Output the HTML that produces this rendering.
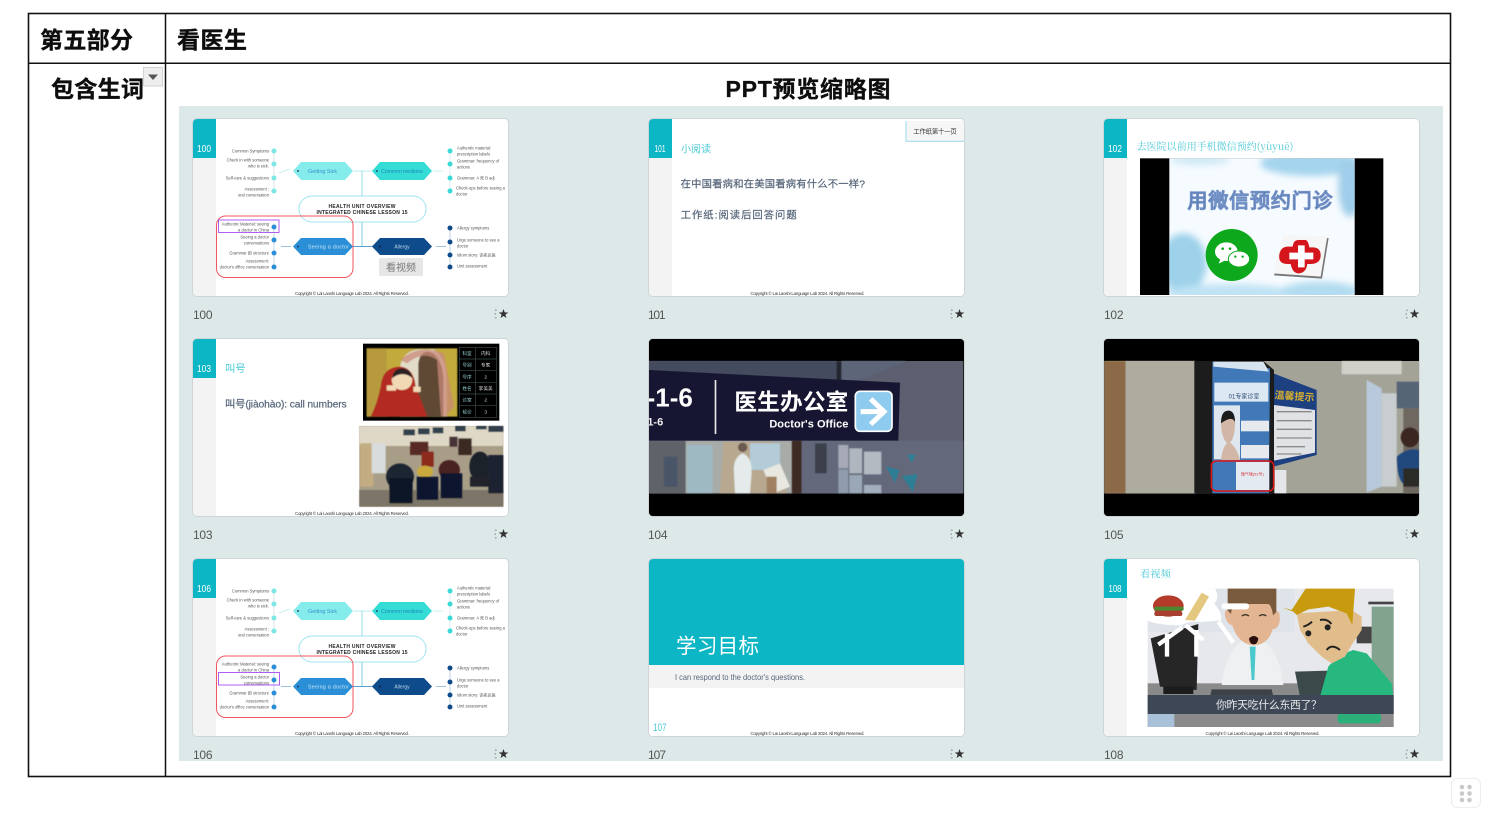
<!DOCTYPE html>
<html lang="zh">
<head>
<meta charset="utf-8">
<title>第五部分 看医生</title>
<style>
html,body{margin:0;padding:0;background:#fff;width:1500px;height:823px;overflow:hidden}
svg{display:block}
text{font-family:"Liberation Sans","Noto Sans CJK SC",sans-serif}
.h{font-weight:700;fill:#0c0c0c;stroke:#0c0c0c;stroke-width:.35px;font-size:23px}
.n{font-size:12px;fill:#555}
.s{font-size:4.1px;fill:#555}
.c{font-size:4.4px;fill:#333;text-anchor:middle}
.w{fill:#fff;text-anchor:middle}
.t{fill:#4cc9d6}
.g{fill:#56667a;stroke:#56667a;stroke-width:.6px}
</style>
</head>
<body>
<svg width="1500" height="823" viewBox="0 0 1500 823" xmlns="http://www.w3.org/2000/svg">
<defs>
<clipPath id="cc"><rect width="315" height="177" rx="4"/></clipPath>
<clipPath id="c102"><rect x="238" y="175" width="556" height="410"/></clipPath>
<filter id="bc" x="-2%" y="-2%" width="104%" height="104%"><feGaussianBlur stdDeviation=".38"/></filter>
<filter id="b1" x="-5%" y="-5%" width="110%" height="110%"><feGaussianBlur stdDeviation="1.6"/></filter>
<filter id="b2" x="-30%" y="-30%" width="160%" height="160%"><feGaussianBlur stdDeviation="10"/></filter>
<filter id="bt" x="-3%" y="-20%" width="106%" height="140%"><feGaussianBlur stdDeviation=".3"/></filter>
<g id="st">
<polygon points="0,-5 1.18,-1.62 4.76,-1.55 1.9,.62 2.94,4.05 0,2 -2.94,4.05 -1.9,.62 -4.76,-1.55 -1.18,-1.62" fill="#333"/>
<path d="M-8.5,-3.8h1.6M-9,0h1.4M-8.5,3.8h1.6" stroke="#777" stroke-width=".9" fill="none"/>
</g>
</defs>

<rect width="1500" height="823" fill="#fff"/>

<!-- table -->
<rect x="28.500" y="13.500" width="1422" height="763" fill="#fff" stroke="#111" stroke-width="1.600"/>
<path d="M165.500,13V777M28,63.300H1451" stroke="#111" stroke-width="1.500" fill="none"/>

<g filter="url(#bt)">
<text class="h" x="40" y="48" textLength="93">第五部分</text>
<text class="h" x="177" y="48" textLength="70">看医生</text>
<text class="h" x="51" y="97" textLength="93">包含生词</text>
<text class="h" x="725.500" y="97" textLength="165">PPT预览缩略图</text>
</g>

<rect x="143.500" y="67.500" width="19" height="18.500" fill="#eee" stroke="#d2d2d2"/>
<polygon points="148,74.500 158,74.500 153,80" fill="#555"/>

<!-- panel -->
<rect x="179" y="106" width="1264" height="655" fill="#dde8e8"/>

<!-- Card 100 -->
<g transform="translate(193,119)">
<rect x="-.5" y="-.5" width="316" height="178" rx="4.500" fill="#fff" stroke="#cfd5d6"/>
<g clip-path="url(#cc)"><g filter="url(#bc)">
<rect width="315" height="177" fill="#fff"/>
<rect width="23" height="177" fill="#f4f3f4"/>
<rect width="23" height="39" fill="#0cb6c4"/>
<text class="w" x="11" y="33" font-size="10.500" textLength="14" lengthAdjust="spacingAndGlyphs">100</text>
<path d="M161,52H231" stroke="#a6e8ea" stroke-width=".8"/>
<path d="M169,52V78" stroke="#8fdfe6" stroke-width="1"/>
<path d="M169,103V127" stroke="#7ccbe6" stroke-width="1"/>
<path d="M160,127.500H180" stroke="#5f9fd0" stroke-width="1"/>
<path d="M86,54L97,50M240,52H250" stroke="#b8eeee" stroke-width=".8"/>
<path d="M88,127.500H98M243,127.500H253" stroke="#7fb0d8" stroke-width=".8"/>
<path d="M81,32V72" stroke="#cfd8d8" stroke-width=".7"/>
<path d="M81,108V148" stroke="#a8c8e0" stroke-width=".7"/>
<path d="M257,32V72" stroke="#cfe8e8" stroke-width=".7"/>
<path d="M257,109V148" stroke="#a8c0d8" stroke-width=".7"/>
<polygon points="100,52 108,43 152,43 160,52 152,61 108,61" fill="#84ecea"/>
<polygon points="179,52 187,43 231,43 239,52 231,61 187,61" fill="#36dcd6"/>
<polygon points="100,127.500 108,119 152,119 160,127.500 152,136 108,136" fill="#2a8fd6"/>
<polygon points="179,127.500 187,119 231,119 239,127.500 231,136 187,136" fill="#0f4c8a"/>
<circle cx="105" cy="52" r=".9" fill="#225"/><circle cx="184" cy="52" r=".9" fill="#225"/><circle cx="105" cy="127.500" r=".9" fill="#225"/><circle cx="187" cy="127.500" r=".9" fill="#113"/>
<text x="115" y="54" font-size="5.400" fill="#3b8fcf">Getting Sick</text>
<text x="188" y="54" font-size="5.400" fill="#1a8dbb" textLength="42">Common medicine</text>
<text x="115" y="129.500" font-size="5.200" fill="#d0e8f8" textLength="41">Seeing a doctor</text>
<text x="209" y="129.500" font-size="5" fill="#b9d4ea" text-anchor="middle">Allergy</text>
<rect x="106" y="77" width="127" height="26" rx="13" fill="#fff" fill-opacity=".7" stroke="#9fe4f2" stroke-width="1"/>
<text x="169" y="89" font-size="5" font-weight="700" fill="#222" text-anchor="middle" textLength="67">HEALTH UNIT OVERVIEW</text>
<text x="169" y="95" font-size="5" font-weight="700" fill="#222" text-anchor="middle" textLength="91">INTEGRATED CHINESE LESSON 15</text>
<g fill="#7fe6e8"><circle cx="81" cy="32" r="2.500"/><circle cx="81" cy="45" r="2.500"/><circle cx="81" cy="59" r="2.500"/><circle cx="81" cy="72" r="2.500"/></g>
<g fill="#2a8fd6"><circle cx="81" cy="108" r="2.500"/><circle cx="81" cy="121" r="2.500"/><circle cx="81" cy="134" r="2.500"/><circle cx="81" cy="148" r="2.500"/></g>
<g fill="#3bd8d8"><circle cx="257" cy="32" r="2.500"/><circle cx="257" cy="45" r="2.500"/><circle cx="257" cy="59" r="2.500"/><circle cx="257" cy="72" r="2.500"/></g>
<g fill="#0f4c8a"><circle cx="257" cy="109" r="2.500"/><circle cx="257" cy="123" r="2.500"/><circle cx="257" cy="136" r="2.500"/><circle cx="257" cy="148" r="2.500"/></g>
<g text-anchor="end">
<text class="s" x="76" y="33.600">Common Symptoms</text>
<text class="s" x="76" y="42.600">Check in with someone</text>
<text class="s" x="76" y="48.600">who is sick.</text>
<text class="s" x="76" y="60.600">Self-care &amp; suggestions</text>
<text class="s" x="76" y="71.600">Assessment :</text>
<text class="s" x="76" y="77.600">oral conversation</text>
<text class="s" x="76" y="106.600">Authentic Material: seeing</text>
<text class="s" x="76" y="112.600">a doctor in China</text>
<text class="s" x="76" y="119.600">Seeing a doctor</text>
<text class="s" x="76" y="125.600">conversations</text>
<text class="s" x="76" y="135.600">Grammar 把 structure</text>
<text class="s" x="76" y="143.600">Assessment:</text>
<text class="s" x="76" y="149.600">doctor's office conversation</text>
</g>
<text class="s" x="264" y="30.600">Authentic material:</text>
<text class="s" x="264" y="36.600">prescription labels</text>
<text class="s" x="264" y="43.600">Grammar: frequency of</text>
<text class="s" x="264" y="49.600">actions</text>
<text class="s" x="264" y="60.600">Grammar: A 死 B adj</text>
<text class="s" x="263" y="70.600">Check-ups before seeing a</text>
<text class="s" x="263" y="76.600">doctor</text>
<text class="s" x="264" y="110.600">Allergy symptoms</text>
<text class="s" x="264" y="122.600">Urge someone to see a</text>
<text class="s" x="264" y="128.600">doctor</text>
<text class="s" x="264" y="137.600">Idiom story: 讳疾忌医</text>
<text class="s" x="264" y="148.600">Unit assessment</text>
<rect x="23.500" y="97" width="136.500" height="61.500" rx="9" fill="none" stroke="#f2565e" stroke-width="1"/>
<rect x="25.500" y="101" width="60.500" height="12.500" fill="none" stroke="#a84df0" stroke-width=".9"/>
<rect x="186" y="139" width="44" height="18" rx="2" fill="#e6e6e6"/>
<text x="208" y="152" font-size="10" fill="#777" text-anchor="middle">看视频</text>
<text class="c" x="159" y="175.800" textLength="114">Copyright © Lai Laoshi Language Lab 2024. All Rights Reserved.</text>
</g></g></g>
<text class="n" x="193" y="319" textLength="19.500">100</text>
<use href="#st" x="503.500" y="314"/>

<!-- Card 101 -->
<g transform="translate(649,119)">
<rect x="-.5" y="-.5" width="316" height="178" rx="4.500" fill="#fff" stroke="#cfd5d6"/>
<g clip-path="url(#cc)"><g filter="url(#bc)">
<rect width="315" height="177" fill="#fff"/>
<rect width="23" height="177" fill="#f4f3f4"/>
<rect width="23" height="39" fill="#0cb6c4"/>
<text class="w" x="11" y="33" font-size="10.500" textLength="11" lengthAdjust="spacingAndGlyphs">101</text>
<g transform="translate(-9,-59) scale(.33333)">
<text class="t" x="123" y="277" font-size="30">小阅读</text>
<text class="g" x="122" y="383" font-size="31" textLength="553">在中国看病和在美国看病有什么不一样?</text>
<text class="g" x="122" y="476" font-size="31" textLength="348">工作纸:阅读后回答问题</text>
<rect x="797" y="183" width="180" height="61" fill="#f6f6f6"/>
<path d="M798,183V244H980" fill="none" stroke="#a8dff0" stroke-width="3.500"/>
<text x="820" y="221" font-size="19" fill="#333" textLength="130">工作纸第十一页</text>
</g>
<text class="c" x="158.500" y="175.800" textLength="114">Copyright © Lai Laoshi Language Lab 2024. All Rights Reserved.</text>
</g></g></g>
<text class="n" x="648" y="319" textLength="17.500">101</text>
<use href="#st" x="959.500" y="314"/>

<!-- Card 102 -->
<g transform="translate(1104,119)">
<rect x="-.5" y="-.5" width="316" height="178" rx="4.500" fill="#fff" stroke="#cfd5d6"/>
<g clip-path="url(#cc)"><g filter="url(#bc)">
<rect width="315" height="177" fill="#fff"/>
<rect width="23" height="177" fill="#f4f3f4"/>
<rect width="23" height="39" fill="#0cb6c4"/>
<text class="w" x="11" y="33" font-size="10.500" textLength="14" lengthAdjust="spacingAndGlyphs">102</text>
<g transform="translate(-14,-19) scale(.33333)">
<text class="t" x="140" y="150" font-size="30" textLength="470" style="font-family:'Noto Serif CJK SC','Liberation Serif',serif">去医院以前用手机微信预约(yùyuē)</text>
<rect x="150" y="175" width="730" height="410" fill="#000"/>
<rect x="238" y="175" width="556" height="410" fill="#f6fbff"/>
<g clip-path="url(#c102)">
<g filter="url(#b2)">
<ellipse cx="660" cy="190" rx="150" ry="38" fill="#a4d4ee"/>
<ellipse cx="330" cy="180" rx="90" ry="16" fill="#cfeaf6"/>
<ellipse cx="780" cy="260" rx="35" ry="90" fill="#9fcdea"/>
<ellipse cx="280" cy="490" rx="70" ry="90" fill="#9ed2ea"/>
<ellipse cx="420" cy="580" rx="190" ry="28" fill="#bfe3f4"/>
<ellipse cx="690" cy="575" rx="120" ry="30" fill="#b2dcf0"/>
</g>
</g>
<text x="510" y="322" font-size="60" text-anchor="middle" textLength="435" fill="#23407c" stroke="#6f8fc4" stroke-width="4" style="font-family:'WenQuanYi Zen Hei','Noto Sans CJK SC',sans-serif">用微信预约门诊</text>
<circle cx="425" cy="465" r="78" fill="#0ca81c"/>
<ellipse cx="409" cy="455" rx="34" ry="28" fill="#fff"/>
<path d="M392,475l-6,16l20,-10z" fill="#fff"/>
<ellipse cx="447" cy="477" rx="32" ry="24" fill="#fff" stroke="#0ca81c" stroke-width="3"/>
<circle cx="398" cy="446" r="4" fill="#0ca81c"/><circle cx="420" cy="446" r="4" fill="#0ca81c"/><circle cx="436" cy="470" r="3.500" fill="#0ca81c"/><circle cx="458" cy="470" r="3.500" fill="#0ca81c"/>
<polygon points="584,411 716,414 696,536 552,526" fill="#777"/>
<polygon points="580,405 712,408 692,530 548,520" fill="#f6f6f6"/>
<path d="M626,420h20q8,0 12,22h10q24,0 24,24t-28,26h-12q-4,26 -24,28t-26,-28h-12q-26,-2 -22,-28t30,-24h10q2,-20 18,-20z" fill="#d4191e"/>
<path d="M624,436h20v22h26v20h-26v24h-20v-24h-26v-20h26z" fill="#fff"/>
</g>
</g></g></g>
<text class="n" x="1104" y="319" textLength="19.500">102</text>
<use href="#st" x="1414.500" y="314"/>

<!-- Card 103 -->
<g transform="translate(193,339)">
<rect x="-.5" y="-.5" width="316" height="178" rx="4.500" fill="#fff" stroke="#cfd5d6"/>
<g clip-path="url(#cc)"><g filter="url(#bc)">
<rect width="315" height="177" fill="#fff"/>
<rect width="23" height="177" fill="#f4f3f4"/>
<rect width="23" height="39" fill="#0cb6c4"/>
<text class="w" x="11" y="33" font-size="10.500" textLength="14" lengthAdjust="spacingAndGlyphs">103</text>
<g transform="translate(-13,-9) scale(.33333)">
<text class="t" x="135" y="126" font-size="31">叫号</text>
<text class="g" x="135" y="232" font-size="31" textLength="365">叫号(jiàohào): call numbers</text>
<rect x="549" y="41" width="409" height="231" fill="#000"/>
<g filter="url(#b1)">
<rect x="560" y="55" width="272" height="205" fill="#c3aa3e"/>
<rect x="560" y="55" width="60" height="205" fill="#b69a3c"/>
<path d="M660,260V110q10,-50 60,-52h40q40,20 40,90v112z" fill="#e2dcc8"/>
<path d="M715,260V100q5,-35 30,-35q40,10 45,80v115z" fill="#5e4836"/>
<path d="M662,90q50,-50 130,-20l30,160l-25,30l-14,0l-12,-170q-40,-30 -90,10z" fill="#c98a78" fill-opacity=".75"/>
<path d="M572,260q20,-40 30,-90q5,-60 60,-60q40,5 45,60q20,50 35,90z" fill="#b32a20"/>
<ellipse cx="666" cy="150" rx="31" ry="30" fill="#f1d9b6"/>
<path d="M636,145q5,-30 30,-30q25,0 32,30q-30,-25 -62,0z" fill="#2a2220"/>
<rect x="620" y="166" width="28" height="16" fill="#f1d9b6"/><rect x="700" y="170" width="22" height="16" fill="#f1d9b6"/>
</g>
<g fill="none" stroke="#3a4a4a" stroke-width="2"><rect x="838" y="52" width="112" height="210"/><path d="M838,87H950M838,122H950M838,157H950M838,192H950M838,227H950M886,52V262"/></g>
<g font-size="14" fill="#8fc8c8" text-anchor="middle"><text x="861" y="75">科室</text><text x="861" y="110">号别</text><text x="861" y="145">号序</text><text x="861" y="180">姓名</text><text x="861" y="215">诊室</text><text x="861" y="250">候诊</text></g>
<g font-size="14" fill="#ddd" text-anchor="middle"><text x="917" y="75">内科</text><text x="917" y="110">专家</text><text x="917" y="145">2</text><text x="917" y="180">李美美</text><text x="917" y="215">2</text><text x="917" y="250">3</text></g>
<rect x="538" y="288" width="432" height="242" fill="#a89e88"/>
<g filter="url(#b1)">
<rect x="538" y="288" width="432" height="60" fill="#dfd8c6"/>
<rect x="540" y="340" width="40" height="130" fill="#c3ab82"/>
<rect x="575" y="340" width="42" height="90" fill="#d8dcdc"/>
<rect x="690" y="335" width="55" height="40" fill="#582a28"/>
<rect x="835" y="325" width="40" height="50" fill="#3a2c20"/>
<rect x="808" y="320" width="25" height="30" fill="#4a3238"/>
<g fill="#33404e"><rect x="670" y="298" width="35" height="18"/><rect x="714" y="295" width="35" height="18"/><rect x="758" y="292" width="32" height="18"/><rect x="825" y="288" width="32" height="16"/><rect x="888" y="288" width="32" height="10"/><rect x="925" y="288" width="45" height="18"/></g>
<rect x="538" y="480" width="432" height="50" fill="#7c7468"/>
<rect x="725" y="365" width="36" height="45" fill="#8c2a1c"/>
<ellipse cx="660" cy="440" rx="42" ry="40" fill="#1e2530"/>
<ellipse cx="735" cy="425" rx="24" ry="18" fill="#c9a83c"/>
<ellipse cx="808" cy="420" rx="32" ry="30" fill="#4a2420"/>
<rect x="628" y="445" width="70" height="75" fill="#0e1626"/>
<rect x="710" y="440" width="65" height="70" fill="#10192e"/>
<rect x="782" y="430" width="65" height="75" fill="#10192e"/>
<ellipse cx="900" cy="410" rx="32" ry="45" fill="#1f232c"/>
<rect x="925" y="375" width="45" height="115" fill="#1a2230"/>
<rect x="870" y="440" width="60" height="30" fill="#20242c"/>
</g>
</g>
<text class="c" x="159" y="175.800" textLength="114">Copyright © Lai Laoshi Language Lab 2024. All Rights Reserved.</text>
</g></g></g>
<text class="n" x="193" y="539" textLength="19.500">103</text>
<use href="#st" x="503.500" y="534"/>

<!-- Card 104 -->
<g transform="translate(649,339)">
<rect x="-.5" y="-.5" width="316" height="178" rx="4.500" fill="#000" stroke="#cfd5d6"/>
<g clip-path="url(#cc)"><g filter="url(#bc)">
<rect width="315" height="177" fill="#000"/>
<g transform="translate(-9,-9) scale(.33333)">
<rect x="27" y="93" width="943" height="397" fill="#5c5f70"/>
<g filter="url(#b1)">
<rect x="27" y="93" width="570" height="60" fill="#454b5e"/>
<polygon points="605,93 800,93 660,150 605,150" fill="#5d6578"/>
<rect x="590" y="93" width="14" height="60" fill="#22252e"/>
<rect x="27" y="332" width="430" height="158" fill="#a7aca9"/>
<rect x="27" y="332" width="110" height="158" fill="#5f6268"/>
<rect x="140" y="345" width="78" height="145" fill="#9fb9c2"/>
<rect x="72" y="380" width="40" height="90" fill="#4a5568"/>
<polygon points="240,490 250,335 400,335 440,490" fill="#b8a890"/>
<rect x="330" y="340" width="90" height="80" fill="#b3ccd8"/>
<path d="M282,430q-5,-45 25,-60q28,8 28,55l-5,65h-45z" fill="#e4ebea"/>
<circle cx="308" cy="352" r="14" fill="#6a5a50"/>
<polygon points="420,400 450,470 400,490 370,420" fill="#e8e8e0"/>
<rect x="380" y="440" width="30" height="50" fill="#a08060"/>
<rect x="455" y="332" width="30" height="158" fill="#3e2a24"/>
<polygon points="485,332 970,332 970,490 485,490" fill="#63687a"/>
<rect x="595" y="345" width="30" height="70" fill="#a5aab6"/><rect x="628" y="355" width="38" height="75" fill="#b0b6bf"/><rect x="672" y="365" width="52" height="68" fill="#b4bac2"/>
<rect x="595" y="418" width="30" height="72" fill="#8f9cae"/><rect x="628" y="435" width="38" height="55" fill="#9aa7b6"/><rect x="672" y="465" width="52" height="25" fill="#a1aebc"/>
<rect x="525" y="340" width="35" height="90" fill="#3a3f4c"/>
</g>
<polygon points="801,374 827,374 816,399" fill="#2f7f95"/>
<polygon points="738,410 778,420 765,458" fill="#2f7f95"/>
<polygon points="786,438 833,432 818,486" fill="#2f7f95"/>
<polygon points="27,120 780,158 775,332 27,332" fill="#141930"/>
<rect x="224" y="150" width="5" height="162" fill="#e8e8e8"/>
<text x="20" y="230" font-size="78" font-weight="700" fill="#fff">-1-6</text>
<text x="22" y="286" font-size="33" font-weight="700" fill="#eee">1-6</text>
<text x="283" y="240" font-size="68" font-weight="700" fill="#fff" textLength="342">医生办公室</text>
<text x="388" y="292" font-size="33" font-weight="700" fill="#fff" textLength="237">Doctor's Office</text>
<rect x="646" y="184" width="110" height="120" rx="14" fill="#8ecbee" stroke="#fff" stroke-width="5"/>
<path d="M662,245H730M692,207L732,245L692,283" fill="none" stroke="#fff" stroke-width="15"/>
</g></g></g></g>
<text class="n" x="648" y="539" textLength="19.500">104</text>
<use href="#st" x="959.500" y="534"/>

<!-- Card 105 -->
<g transform="translate(1104,339)">
<rect x="-.5" y="-.5" width="316" height="178" rx="4.500" fill="#000" stroke="#cfd5d6"/>
<g clip-path="url(#cc)"><g filter="url(#bc)">
<rect width="315" height="177" fill="#000"/>
<g transform="translate(-9,-9) scale(.33333)">
<rect x="28" y="93" width="945" height="397" fill="#a4a398"/>
<g filter="url(#b1)">
<rect x="28" y="93" width="64" height="397" fill="#8d6a46"/>
<rect x="92" y="93" width="210" height="397" fill="#aeac9e"/>
<rect x="740" y="93" width="180" height="40" fill="#d0d0c8"/>
<polygon points="815,150 860,175 860,470 815,488" fill="#b9c9dc"/>
<rect x="860" y="190" width="45" height="280" fill="#c8ced0"/>
<rect x="905" y="155" width="68" height="80" fill="#576575"/>
<rect x="925" y="235" width="48" height="255" fill="#6e6860"/>
<ellipse cx="945" cy="322" rx="28" ry="30" fill="#3a2820"/>
<path d="M905,380q35,-30 68,-20v100h-50q-18,-20 -18,-80z" fill="#20487e"/>
<rect x="925" y="415" width="48" height="55" fill="#2a2a28"/>
</g>
<polygon points="535,130 665,180 665,375 535,410" fill="#1e3f80"/>
<polygon points="537,225 660,240 660,368 537,392" fill="#e0e2e6"/>
<text x="538" y="205" font-size="30" font-weight="700" fill="#d8b030" textLength="120" transform="rotate(4 538 205)">温馨提示</text>
<g stroke="#8a8a8a" stroke-width="4"><path d="M545,245H650M545,272H650M545,298H650M545,324H650M545,350H630M545,372H620"/></g>
<rect x="298" y="93" width="55" height="397" fill="#1d1d1d"/>
<polygon points="350,93 505,93 537,120 537,490 350,490" fill="#1a1a1a"/>
<polygon points="352,95 525,115 522,490 352,490" fill="#3f78b8"/>
<polygon points="355,95 505,95 522,125 355,110" fill="#d6e4f0"/>
<polygon points="358,158 520,158 520,215 358,215" fill="#dce8f2"/>
<text x="401" y="205" font-size="18" fill="#2c4a78" textLength="92">01专家诊室</text>
<rect x="357" y="226" width="78" height="162" fill="#dfe6ee"/>
<path d="M378,390q5,-40 18,-50q-18,-20 -18,-62q3,-35 22,-35q20,2 20,35q0,45 -15,60q20,15 30,52z" fill="#d2b6a6"/>
<path d="M378,280q0,-38 22,-38q20,0 20,35q-8,-22 -42,3z" fill="#1a1a1a"/>
<rect x="438" y="272" width="84" height="32" fill="#e6eaee"/>
<rect x="438" y="345" width="84" height="40" fill="#e6eaee"/>
<rect x="423" y="396" width="100" height="84" fill="#e4eaf2"/>
<text x="438" y="436" font-size="12" fill="#d83838" textLength="68">微气喘(51号)</text>
<rect x="540" y="420" width="34" height="70" fill="#e4e6ea"/>
<rect x="349" y="393" width="187" height="90" rx="15" fill="none" stroke="#e01818" stroke-width="4.500"/>
</g></g></g></g>
<text class="n" x="1104" y="539" textLength="19.500">105</text>
<use href="#st" x="1414.500" y="534"/>

<!-- Card 106 -->
<g transform="translate(193,559)">
<rect x="-.5" y="-.5" width="316" height="178" rx="4.500" fill="#fff" stroke="#cfd5d6"/>
<g clip-path="url(#cc)"><g filter="url(#bc)">
<rect width="315" height="177" fill="#fff"/>
<rect width="23" height="177" fill="#f4f3f4"/>
<rect width="23" height="39" fill="#0cb6c4"/>
<text class="w" x="11" y="33" font-size="10.500" textLength="14" lengthAdjust="spacingAndGlyphs">106</text>
<path d="M161,52H231" stroke="#a6e8ea" stroke-width=".8"/>
<path d="M169,52V78" stroke="#8fdfe6" stroke-width="1"/>
<path d="M169,103V127" stroke="#7ccbe6" stroke-width="1"/>
<path d="M160,127.500H180" stroke="#5f9fd0" stroke-width="1"/>
<path d="M86,54L97,50M240,52H250" stroke="#b8eeee" stroke-width=".8"/>
<path d="M88,127.500H98M243,127.500H253" stroke="#7fb0d8" stroke-width=".8"/>
<path d="M81,32V72" stroke="#cfd8d8" stroke-width=".7"/>
<path d="M81,108V148" stroke="#a8c8e0" stroke-width=".7"/>
<path d="M257,32V72" stroke="#cfe8e8" stroke-width=".7"/>
<path d="M257,109V148" stroke="#a8c0d8" stroke-width=".7"/>
<polygon points="100,52 108,43 152,43 160,52 152,61 108,61" fill="#84ecea"/>
<polygon points="179,52 187,43 231,43 239,52 231,61 187,61" fill="#36dcd6"/>
<polygon points="100,127.500 108,119 152,119 160,127.500 152,136 108,136" fill="#2a8fd6"/>
<polygon points="179,127.500 187,119 231,119 239,127.500 231,136 187,136" fill="#0f4c8a"/>
<circle cx="105" cy="52" r=".9" fill="#225"/><circle cx="184" cy="52" r=".9" fill="#225"/><circle cx="105" cy="127.500" r=".9" fill="#225"/><circle cx="187" cy="127.500" r=".9" fill="#113"/>
<text x="115" y="54" font-size="5.400" fill="#3b8fcf">Getting Sick</text>
<text x="188" y="54" font-size="5.400" fill="#1a8dbb" textLength="42">Common medicine</text>
<text x="115" y="129.500" font-size="5.200" fill="#d0e8f8" textLength="41">Seeing a doctor</text>
<text x="209" y="129.500" font-size="5" fill="#b9d4ea" text-anchor="middle">Allergy</text>
<rect x="106" y="77" width="127" height="26" rx="13" fill="#fff" fill-opacity=".7" stroke="#9fe4f2" stroke-width="1"/>
<text x="169" y="89" font-size="5" font-weight="700" fill="#222" text-anchor="middle" textLength="67">HEALTH UNIT OVERVIEW</text>
<text x="169" y="95" font-size="5" font-weight="700" fill="#222" text-anchor="middle" textLength="91">INTEGRATED CHINESE LESSON 15</text>
<g fill="#7fe6e8"><circle cx="81" cy="32" r="2.500"/><circle cx="81" cy="45" r="2.500"/><circle cx="81" cy="59" r="2.500"/><circle cx="81" cy="72" r="2.500"/></g>
<g fill="#2a8fd6"><circle cx="81" cy="108" r="2.500"/><circle cx="81" cy="121" r="2.500"/><circle cx="81" cy="134" r="2.500"/><circle cx="81" cy="148" r="2.500"/></g>
<g fill="#3bd8d8"><circle cx="257" cy="32" r="2.500"/><circle cx="257" cy="45" r="2.500"/><circle cx="257" cy="59" r="2.500"/><circle cx="257" cy="72" r="2.500"/></g>
<g fill="#0f4c8a"><circle cx="257" cy="109" r="2.500"/><circle cx="257" cy="123" r="2.500"/><circle cx="257" cy="136" r="2.500"/><circle cx="257" cy="148" r="2.500"/></g>
<g text-anchor="end">
<text class="s" x="76" y="33.600">Common Symptoms</text>
<text class="s" x="76" y="42.600">Check in with someone</text>
<text class="s" x="76" y="48.600">who is sick.</text>
<text class="s" x="76" y="60.600">Self-care &amp; suggestions</text>
<text class="s" x="76" y="71.600">Assessment :</text>
<text class="s" x="76" y="77.600">oral conversation</text>
<text class="s" x="76" y="106.600">Authentic Material: seeing</text>
<text class="s" x="76" y="112.600">a doctor in China</text>
<text class="s" x="76" y="119.600">Seeing a doctor</text>
<text class="s" x="76" y="125.600">conversations</text>
<text class="s" x="76" y="135.600">Grammar 把 structure</text>
<text class="s" x="76" y="143.600">Assessment:</text>
<text class="s" x="76" y="149.600">doctor's office conversation</text>
</g>
<text class="s" x="264" y="30.600">Authentic material:</text>
<text class="s" x="264" y="36.600">prescription labels</text>
<text class="s" x="264" y="43.600">Grammar: frequency of</text>
<text class="s" x="264" y="49.600">actions</text>
<text class="s" x="264" y="60.600">Grammar: A 死 B adj</text>
<text class="s" x="263" y="70.600">Check-ups before seeing a</text>
<text class="s" x="263" y="76.600">doctor</text>
<text class="s" x="264" y="110.600">Allergy symptoms</text>
<text class="s" x="264" y="122.600">Urge someone to see a</text>
<text class="s" x="264" y="128.600">doctor</text>
<text class="s" x="264" y="137.600">Idiom story: 讳疾忌医</text>
<text class="s" x="264" y="148.600">Unit assessment</text>
<rect x="23.500" y="97" width="136.500" height="61.500" rx="9" fill="none" stroke="#f2565e" stroke-width="1"/>
<rect x="25.500" y="113.500" width="61" height="12.500" fill="none" stroke="#a84df0" stroke-width=".9"/>
<text class="c" x="159" y="175.800" textLength="114">Copyright © Lai Laoshi Language Lab 2024. All Rights Reserved.</text>
</g></g></g>
<text class="n" x="193" y="759" textLength="19.500">106</text>
<use href="#st" x="503.500" y="754"/>

<!-- Card 107 -->
<g transform="translate(649,559)">
<rect x="-.5" y="-.5" width="316" height="178" rx="4.500" fill="#fff" stroke="#cfd5d6"/>
<g clip-path="url(#cc)"><g filter="url(#bc)">
<rect width="315" height="177" fill="#fff"/>
<rect width="315" height="106" fill="#0cb6c4"/>
<rect y="106" width="315" height="23" fill="#f4f3f4"/>
<text x="27" y="94" font-size="20.500" fill="#fff" textLength="83">学习目标</text>
<text x="26" y="121" font-size="8.500" fill="#56667a" textLength="130" lengthAdjust="spacingAndGlyphs">I can respond to the doctor's questions.</text>
<text x="4" y="172" font-size="11" fill="#4cc9d6" textLength="13.500" lengthAdjust="spacingAndGlyphs">107</text>
<text class="c" x="158.500" y="175.800" textLength="114">Copyright © Lai Laoshi Language Lab 2024. All Rights Reserved.</text>
</g></g></g>
<text class="n" x="648" y="759" textLength="18">107</text>
<use href="#st" x="959.500" y="754"/>

<!-- Card 108 -->
<g transform="translate(1104,559)">
<rect x="-.5" y="-.5" width="316" height="178" rx="4.500" fill="#fff" stroke="#cfd5d6"/>
<g clip-path="url(#cc)"><g filter="url(#bc)">
<rect width="315" height="177" fill="#fff"/>
<rect width="23" height="177" fill="#f4f3f4"/>
<rect width="23" height="39" fill="#0cb6c4"/>
<text class="w" x="11" y="33" font-size="10.500" textLength="13" lengthAdjust="spacingAndGlyphs">108</text>
<g transform="translate(-9,-9) scale(.33333)">
<text class="t" x="135" y="83" font-size="31" style="font-family:'Noto Serif CJK SC','Liberation Serif',serif">看视频</text>
<rect x="158" y="116" width="738" height="415" fill="#e6e8ec"/>
<rect x="158" y="116" width="440" height="130" fill="#dfe4ea"/>
<rect x="158" y="400" width="738" height="131" fill="#8a8a8a"/>
<rect x="158" y="490" width="80" height="41" fill="#a8c0d8"/>
<rect x="830" y="170" width="66" height="240" fill="#82a48e"/>
<rect x="785" y="230" width="45" height="50" fill="#444"/>
<rect x="820" y="155" width="76" height="8" fill="#444"/>
<path d="M380,405q15,-125 90,-145q80,15 95,145z" fill="#eef0f2"/>
<polygon points="464,290 482,290 478,390 470,390" fill="#4cc8cc"/>
<path d="M398,116h146v70q12,-10 10,30q-8,25 -20,20q-15,50 -60,50q-45,-5 -62,-60q-18,-5 -22,-30q-2,-20 12,-15z" fill="#e4b592"/>
<path d="M398,116h146v70l-10,10q-4,-30 -14,-34h-100q-10,10 -12,30l-10,-10z" fill="#7a5a3e"/>
<path d="M462,265q15,-14 28,0q-2,18 -14,18q-12,0 -14,-18z" fill="#2a1010"/>
<path d="M440,198q12,-8 22,0M492,198q12,-8 22,0" stroke="#332" stroke-width="4" fill="none"/>
<rect x="380" y="160" width="82" height="18" rx="8" fill="#fff"/>
<polygon points="167,265 310,222 305,420 195,410" fill="#262626"/>
<rect x="205" y="410" width="90" height="22" fill="#1c1c1c"/>
<path d="M158,116H360q15,25 -2,45q25,30 20,50l-60,5q-35,-5 -60,10q-60,0 -95,-12q-20,-10 -25,-20z" fill="#fff"/>
<ellipse cx="220" cy="168" rx="46" ry="32" fill="#b43a2a"/>
<rect x="178" y="170" width="88" height="12" rx="5" fill="#4a8a30"/>
<rect x="178" y="184" width="84" height="14" rx="6" fill="#a84030"/>
<polygon points="270,210 320,128 342,140 300,212" fill="#e4c880"/>
<path d="M216,320V250M190,284L262,232M304,320V240M272,226L325,270M370,215L415,278" stroke="#fff" stroke-width="13" fill="none"/>
<polygon points="350,418 530,418 535,440 345,440" fill="#3e4248"/>
<polygon points="600,365 700,362 690,440 615,440" fill="#3a4a4c"/>
<path d="M675,440l25,-90q30,-35 75,-50l40,10l75,90l5,40z" fill="#27b87e"/>
<polygon points="605,190 770,180 800,200 800,240 770,285 750,320 710,340 680,320 640,280 615,240" fill="#e2bd8c"/>
<polygon points="560,172 590,180 632,116 780,116 772,225 755,190 700,170 640,178 605,195 595,185" fill="#c89a0a"/>
<circle cx="640" cy="250" r="9" fill="#222"/><circle cx="698" cy="232" r="9" fill="#222"/>
<path d="M625,230q16,-5 26,-15M675,210q22,-5 34,12M695,300q15,-20 40,0" stroke="#222" stroke-width="6" fill="none"/>
<rect x="728" y="490" width="130" height="30" rx="10" fill="#2cb078"/>
<rect x="158" y="435" width="738" height="57" fill="#3e4656"/>
<text x="522" y="476" font-size="33" fill="#e8e8e8" text-anchor="middle" textLength="318">你昨天吃什么东西了？</text>
</g>
<text class="c" x="158.500" y="175.800" textLength="114">Copyright © Lai Laoshi Language Lab 2024. All Rights Reserved.</text>
</g></g></g>
<text class="n" x="1104" y="759" textLength="19.500">108</text>
<use href="#st" x="1414.500" y="754"/>

<!-- drag handle -->
<rect x="1451.500" y="778.500" width="29" height="29" rx="6" fill="#fff" stroke="#eee" stroke-width="1.200"/>
<g fill="#c9c9c9"><circle cx="1462" cy="787" r="2.300"/><circle cx="1469.500" cy="787" r="2.300"/><circle cx="1462" cy="793.500" r="2.300"/><circle cx="1469.500" cy="793.500" r="2.300"/><circle cx="1462" cy="800" r="2.300"/><circle cx="1469.500" cy="800" r="2.300"/></g>
</svg>
</body>
</html>
